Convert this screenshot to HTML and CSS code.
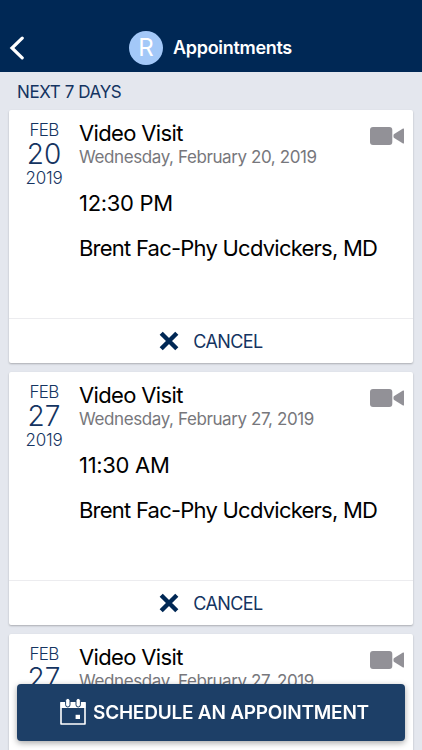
FILE: index.html
```html
<!DOCTYPE html>
<html lang="en">
<head>
  <meta charset="UTF-8" />
  <meta name="viewport" content="width=device-width, initial-scale=1" />
  <title>Appointments</title>
  <link rel="stylesheet" href="styles.css">
</head>
<body>
  <header class="header">
    <a href="#" class="back" aria-label="Back">
      <svg width="16" height="26" viewBox="0 0 16 26"><path d="M14.2 3.2 L4 13 L14.2 22.8" fill="none" stroke="#fff" stroke-width="3.2" stroke-linecap="round" stroke-linejoin="miter"/></svg>
    </a>
    <div class="avatar">R</div>
    <h1 class="title">Appointments</h1>
  </header>
  <main class="list">
    <h2 class="section-title">NEXT 7 DAYS</h2>

    <div class="card">
      <div class="card-body">
        <div class="date">
          <span class="month">FEB</span>
          <span class="day">20</span>
          <span class="year">2019</span>
        </div>
        <div class="details">
          <div class="visit">Video Visit</div>
          <div class="full-date">Wednesday, February 20, 2019</div>
          <div class="time">12:30 PM</div>
          <div class="provider">Brent Fac-Phy Ucdvickers, MD</div>
        </div>
        <svg class="camera" width="34" height="18" viewBox="0 0 34 18"><rect width="22.3" height="18" rx="3"/><path d="M23.5 8 Q23.5 7.5 24.2 7 L33 1.6 Q34 1.1 34 2 V16 Q34 16.9 33 16.4 L24.2 11 Q23.5 10.5 23.5 10 Z"/></svg>
      </div>
      <button class="cancel">
        <svg width="20" height="20" viewBox="0 0 20 20"><path d="M2.2 2.2 L17.8 17.8 M17.8 2.2 L2.2 17.8" stroke="#002855" stroke-width="4.4"/></svg>
        <span>CANCEL</span>
      </button>
    </div>

    <div class="card">
      <div class="card-body">
        <div class="date">
          <span class="month">FEB</span>
          <span class="day">27</span>
          <span class="year">2019</span>
        </div>
        <div class="details">
          <div class="visit">Video Visit</div>
          <div class="full-date">Wednesday, February 27, 2019</div>
          <div class="time">11:30 AM</div>
          <div class="provider">Brent Fac-Phy Ucdvickers, MD</div>
        </div>
        <svg class="camera" width="34" height="18" viewBox="0 0 34 18"><rect width="22.3" height="18" rx="3"/><path d="M23.5 8 Q23.5 7.5 24.2 7 L33 1.6 Q34 1.1 34 2 V16 Q34 16.9 33 16.4 L24.2 11 Q23.5 10.5 23.5 10 Z"/></svg>
      </div>
      <button class="cancel">
        <svg width="20" height="20" viewBox="0 0 20 20"><path d="M2.2 2.2 L17.8 17.8 M17.8 2.2 L2.2 17.8" stroke="#002855" stroke-width="4.4"/></svg>
        <span>CANCEL</span>
      </button>
    </div>

    <div class="card">
      <div class="card-body">
        <div class="date">
          <span class="month">FEB</span>
          <span class="day">27</span>
        </div>
        <div class="details">
          <div class="visit">Video Visit</div>
          <div class="full-date">Wednesday, February 27, 2019</div>
        </div>
        <svg class="camera" width="34" height="18" viewBox="0 0 34 18"><rect width="22.3" height="18" rx="3"/><path d="M23.5 8 Q23.5 7.5 24.2 7 L33 1.6 Q34 1.1 34 2 V16 Q34 16.9 33 16.4 L24.2 11 Q23.5 10.5 23.5 10 Z"/></svg>
      </div>
    </div>
  </main>
  <button class="schedule">
    <svg width="26" height="28" viewBox="0 0 26 28">
      <path d="M1 4.8 H25 V26 H1 Z" fill="none" stroke="#fff" stroke-width="1.6" stroke-linejoin="round"/>
      <rect x="0.6" y="4" width="24.8" height="6" fill="#fff"/>
      <rect x="5.6" y="0.4" width="4.4" height="8.6" rx="2.2" fill="#fff" stroke="#1d3f67" stroke-width="1"/>
      <rect x="16" y="0.4" width="4.4" height="8.6" rx="2.2" fill="#fff" stroke="#1d3f67" stroke-width="1"/>
      <rect x="15.6" y="16.8" width="4.4" height="4.2" fill="#fff"/>
    </svg>
    <span>SCHEDULE AN APPOINTMENT</span>
  </button>
</body>
</html>
```

FILE: styles.css
```css
* {
  box-sizing: border-box;
  margin: 0;
  padding: 0;
  font-family: 'Inter', sans-serif;
}
body {
  background: #e4e7ee;
  height: 100vh;
  overflow: hidden;
}
.header {
  display: grid;
  grid-template-columns: 129px 34px 1fr;
  align-items: center;
  height: 72px;
  padding-top: 23px;
  background: #002855;
  color: #fff;
}
.back {
  display: flex;
  padding-left: 8px;
}
.avatar {
  width: 34px;
  height: 34px;
  border-radius: 50%;
  background: #a3c8f8;
  font-size: 24px;
  line-height: 34px;
  text-align: center;
}
.title {
  padding-left: 10px;
  font-size: 18px;
  font-weight: 600;
  letter-spacing: -0.3px;
}
.list {
  height: calc(100vh - 72px);
  padding: 0 9px;
  overflow: hidden;
}
.section-title {
  height: 38px;
  padding-left: 8px;
  font-size: 17px;
  font-weight: 400;
  line-height: 40px;
  letter-spacing: -0.4px;
  color: #143461;
}
.card {
  height: 253px;
  margin-bottom: 9px;
  background: #fff;
  border-radius: 2px;
  box-shadow: 0 1px 2px rgba(0, 0, 0, 0.25);
}
.card-body {
  display: flex;
  height: 208px;
  padding: 8px 9px 0 0;
}
.date {
  display: flex;
  flex-direction: column;
  flex-shrink: 0;
  width: 70px;
  text-align: center;
  font-weight: 300;
  line-height: 24px;
  color: #143461;
}
.month {
  font-size: 17px;
  letter-spacing: -0.7px;
}
.day {
  font-size: 28px;
}
.year {
  font-size: 17px;
  letter-spacing: -0.2px;
}
.details {
  flex: 1;
  min-width: 0;
  padding-top: 2px;
  white-space: nowrap;
  color: #000;
}
.visit {
  font-size: 22px;
  line-height: 26px;
  letter-spacing: -0.65px;
}
.full-date {
  font-size: 17px;
  line-height: 22px;
  letter-spacing: -0.4px;
  color: #77777c;
}
.time,
.provider {
  margin-top: 21px;
  font-size: 22px;
  line-height: 24px;
}
.time {
  margin-top: 23px;
  letter-spacing: -0.3px;
}
.provider {
  letter-spacing: -0.77px;
}
.camera {
  flex-shrink: 0;
  margin-top: 9px;
  fill: #929197;
}
.cancel {
  display: flex;
  align-items: center;
  justify-content: center;
  gap: 14px;
  width: 100%;
  height: 45px;
  background: none;
  border: none;
  border-top: 1px solid #ececef;
  font-size: 18px;
  letter-spacing: -0.6px;
  color: #143461;
}
.schedule {
  display: flex;
  align-items: center;
  position: fixed;
  left: 17px;
  right: 17px;
  bottom: 9px;
  height: 57px;
  padding-left: 43px;
  gap: 7px;
  background: #1d3f67;
  border: none;
  border-radius: 4px;
  box-shadow: 0 2px 6px rgba(0, 0, 0, 0.35);
  font-size: 19px;
  font-weight: 600;
  letter-spacing: -0.22px;
  white-space: nowrap;
  color: #fff;
}
.schedule svg {
  margin-bottom: 2px;
}
```
